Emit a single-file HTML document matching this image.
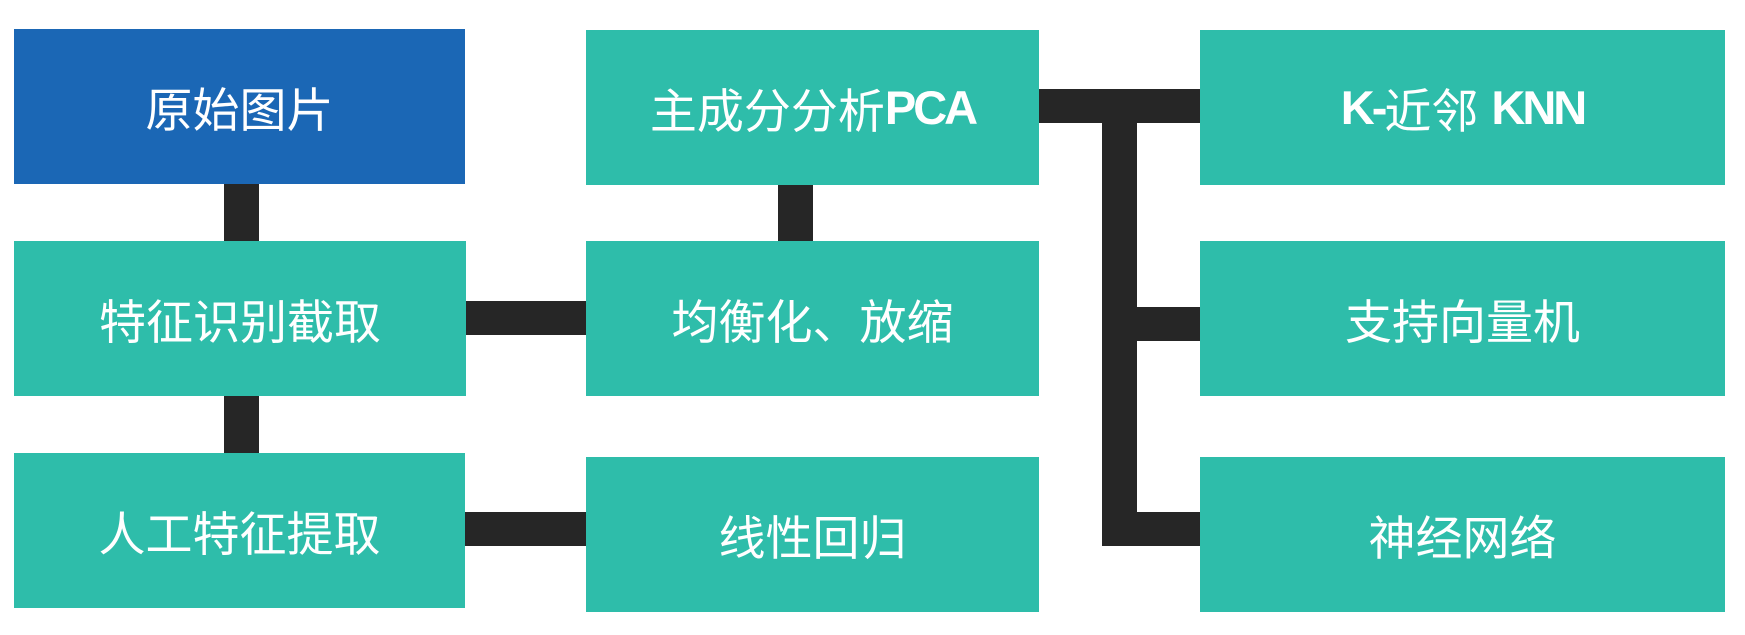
<!DOCTYPE html>
<html><head><meta charset="utf-8"><style>
body{margin:0;width:1745px;height:635px;background:#fff;position:relative;overflow:hidden;font-family:"Liberation Sans","Noto Sans CJK SC",sans-serif}
.b{position:absolute;background:#2EBDAA;color:#fff;display:flex;align-items:center;justify-content:center;font-size:47px;white-space:nowrap}
.l{position:absolute;background:#262626}
b{font-weight:bold;letter-spacing:-3px;font-family:"Liberation Sans Narrow","Liberation Sans",sans-serif}
</style></head><body>
<div class="l" style="left:224px;top:180px;width:35px;height:280px"></div>
<div class="l" style="left:778px;top:180px;width:35px;height:65px"></div>
<div class="l" style="left:462px;top:301px;width:128px;height:34px"></div>
<div class="l" style="left:462px;top:512px;width:128px;height:34px"></div>
<div class="l" style="left:1036px;top:89px;width:168px;height:34px"></div>
<div class="l" style="left:1102px;top:89px;width:35px;height:457px"></div>
<div class="l" style="left:1102px;top:307px;width:100px;height:34px"></div>
<div class="l" style="left:1102px;top:512px;width:100px;height:34px"></div>

<div class="b" style="left:14px;top:29px;width:451px;height:155px;background:#1B67B5">原始图片</div>
<div class="b" style="left:14px;top:241px;width:452px;height:155px">特征识别截取</div>
<div class="b" style="left:14px;top:453px;width:451px;height:155px">人工特征提取</div>
<div class="b" style="left:586px;top:30px;width:453px;height:155px">主成分分析<b>PCA</b></div>
<div class="b" style="left:586px;top:241px;width:453px;height:155px">均衡化、放缩</div>
<div class="b" style="left:586px;top:457px;width:453px;height:155px">线性回归</div>
<div class="b" style="left:1200px;top:30px;width:525px;height:155px"><b>K-</b>近邻&nbsp;<b>KNN</b></div>
<div class="b" style="left:1200px;top:241px;width:525px;height:155px">支持向量机</div>
<div class="b" style="left:1200px;top:457px;width:525px;height:155px">神经网络</div>
</body></html>
